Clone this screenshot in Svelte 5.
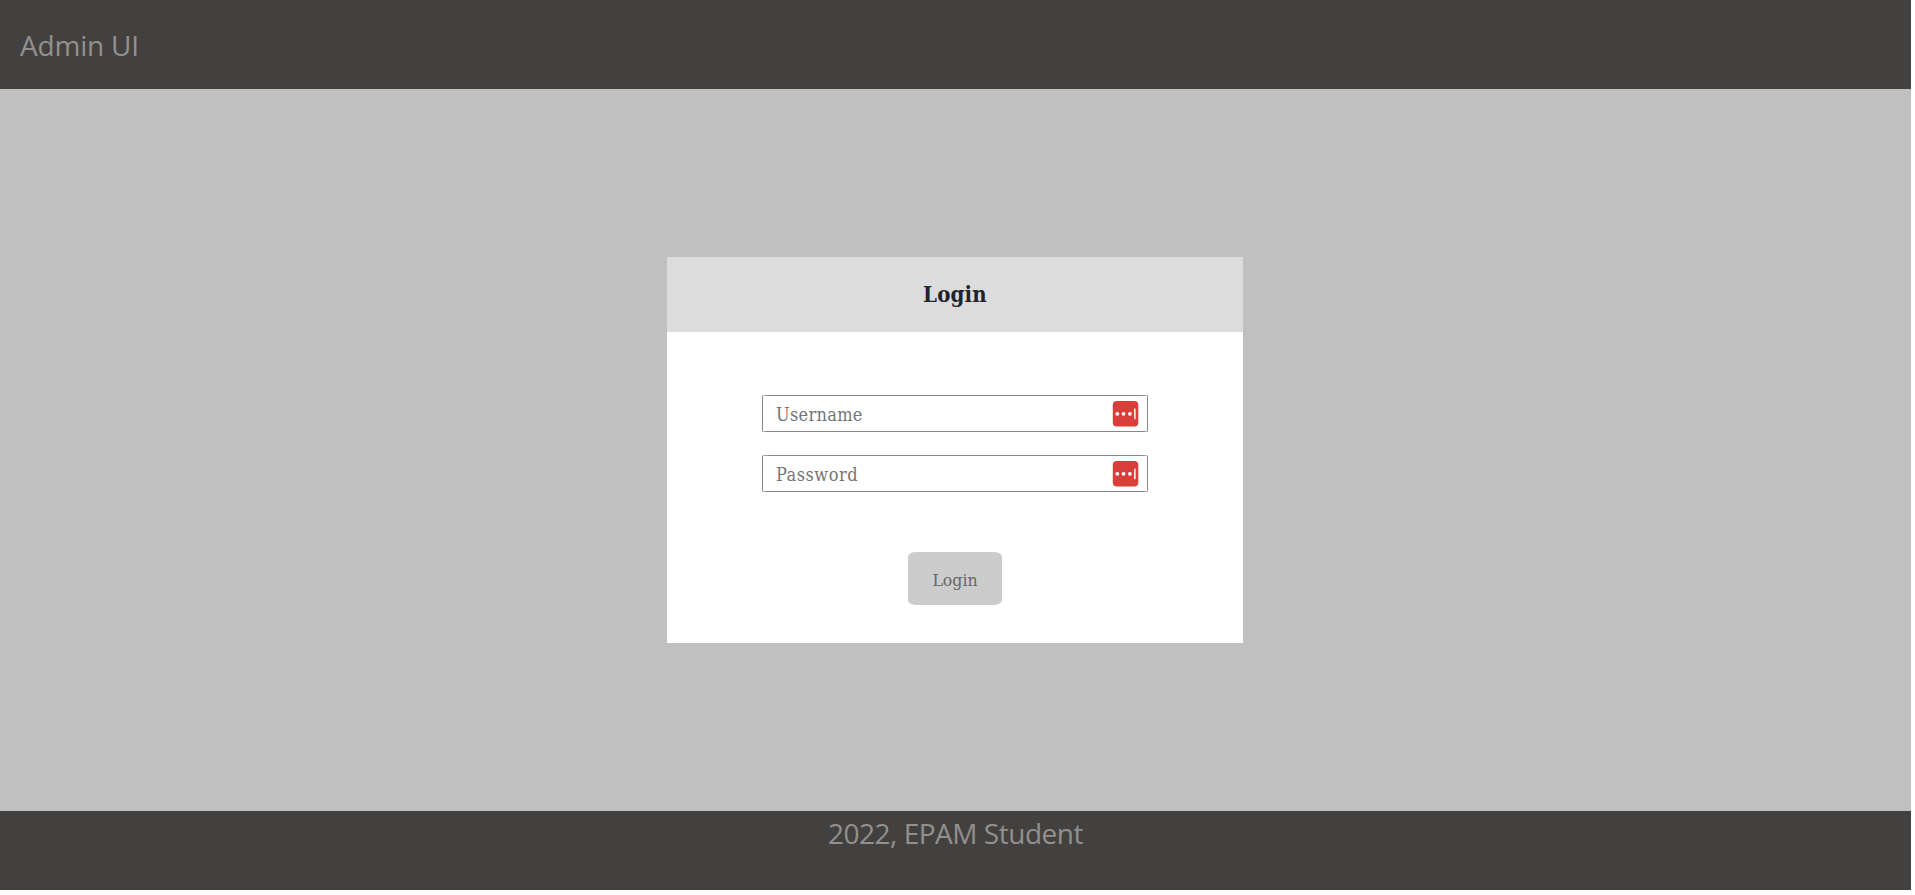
<script>
  const fields = [
    { name: 'username', label: 'Username', type: 'text' },
    { name: 'password', label: 'Password', type: 'password' }
  ];
</script>

<div class="page">
  <header><span class="brand">Admin UI</span></header>
  <main>
    <form class="card">
      <h1><span>Login</span></h1>
      <div class="fields">
        {#each fields as field}
          <label class="field">
            <input class={field.name} type={field.type} placeholder={field.label} />
            <svg class="manager" width="26" height="26" viewBox="0 0 26 26" aria-hidden="true">
              <rect x="-0.2" y="0.1" width="25.5" height="25.3" rx="4" fill="#d83f39" />
              <g fill="#fff">
                <circle cx="4.3" cy="12.8" r="1.9" />
                <circle cx="10.6" cy="12.8" r="1.9" />
                <circle cx="16.9" cy="12.8" r="1.9" />
                <rect x="21.1" y="7.5" width="1.5" height="10.8" rx="0.5" />
              </g>
            </svg>
          </label>
        {/each}
      </div>
      <button type="button" disabled><span>Login</span></button>
    </form>
  </main>
  <footer><span>2022, EPAM Student</span></footer>
</div>

<style>
  :global(body) {
    margin: 0;
    background: #fff;
    overflow: hidden;
  }
  .page {
    width: 1911px;
    height: 890px;
    display: grid;
    grid-template-rows: 89px 722px 79px;
    box-sizing: border-box;
  }
  header,
  footer {
    background: #43413f;
    color: #92908e;
    font: 400 28px/42px "Open Sans", "Noto Sans", sans-serif;
    display: flex;
  }
  header {
    align-items: center;
    padding: 0 0 0 20px;
    box-sizing: border-box;
  }
  .brand {
    letter-spacing: -0.2px;
  }
  footer {
    justify-content: center;
    align-items: flex-start;
    padding-top: 1px;
    box-sizing: border-box;
    letter-spacing: -0.47px;
  }
  main {
    background: #c0c0c0;
    display: flex;
    justify-content: center;
    align-items: flex-start;
    padding: 168px 1px 0 0;
  }
  .card {
    width: 576px;
    height: 386px;
    background: #fff;
    display: flex;
    flex-direction: column;
    align-items: center;
    font-family: "DejaVu Serif Condensed", "DejaVu Serif", serif;
    font-stretch: condensed;
  }
  h1 {
    width: 100%;
    height: 75px;
    margin: 0;
    padding-bottom: 1px;
    box-sizing: border-box;
    background: #dcdcdc;
    color: #212529;
    display: flex;
    justify-content: center;
    align-items: center;
    font-size: 22px;
    font-weight: 700;
    letter-spacing: 0.2px;
  }
  .fields {
    display: grid;
    gap: 23px;
    margin-top: 63px;
  }
  .field {
    display: flex;
    align-items: center;
    width: 386px;
    height: 37px;
    box-sizing: border-box;
    border: 1px solid #888;
    border-radius: 2%;
    padding: 0 8px 0 13px;
  }
  input {
    flex: 1;
    min-width: 0;
    border: 0;
    padding: 2px 0 0;
    outline: 0;
    background: none;
    font: inherit;
    font-size: 18px;
    color: #212529;
    letter-spacing: 0.3px;
  }
  .password {
    letter-spacing: 0.5px;
  }
  input::placeholder {
    color: #757575;
    opacity: 1;
  }
  .manager {
    overflow: visible;
  }
  button {
    width: 94px;
    height: 53px;
    margin-top: 60px;
    border: 0;
    border-radius: 8px / 5px;
    background: #ccc;
    color: #666;
    font: inherit;
    font-size: 17.5px;
    padding: 2px 0 0;
  }
</style>
